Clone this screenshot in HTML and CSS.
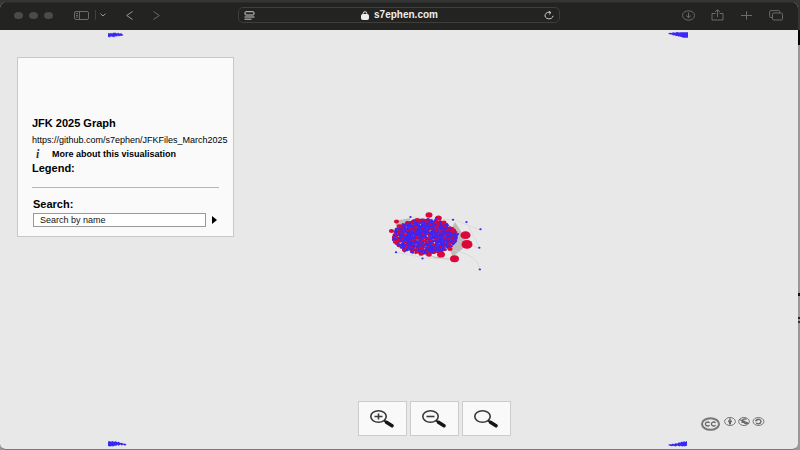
FILE: index.html
```html
<!DOCTYPE html>
<html lang="en">
<head>
<meta charset="utf-8">
<title>JFK 2025 Graph</title>
<link rel="stylesheet" href="styles.css">
</head>
<body>
<div class="window">
  <header class="toolbar">
    <div class="tools-left">
      <div class="lights"><span></span><span></span><span></span></div>
      <button class="tool sidebar" aria-label="Sidebar"><svg width="15" height="9" viewBox="0 0 15 9"><rect x=".5" y=".5" width="14" height="8" rx="1.5"/><path d="M5.5 .5v8M2 2.5h2M2 4.5h2M2 6h2"/></svg></button>
      <span class="divider"></span>
      <button class="tool menu" aria-label="Tab groups"><svg class="lit" width="6" height="4" viewBox="0 0 6 4"><path d="M.5 .7L3 3 5.500 .7"/></svg></button>
      <button class="tool nav" aria-label="Back"><svg class="lit" width="7" height="9" viewBox="0 0 7 9"><path d="M6.500 .5L.7 4.500 6.500 8.500"/></svg></button>
      <button class="tool nav" aria-label="Forward"><svg width="7" height="9" viewBox="0 0 7 9"><path d="M.5 .5L6.300 4.500 .5 8.500"/></svg></button>
    </div>
    <div class="address">
      <button class="tool" aria-label="Reader"><svg class="bright" width="11" height="9" viewBox="0 0 11 9"><rect x="1" y=".7" width="9" height="3.300" rx="1"/><path d="M.5 6h10M.5 8.200h7"/></svg></button>
      <a class="site" href="#"><svg width="8" height="9" viewBox="0 0 8 9"><rect class="solid" x=".5" y="3.500" width="7" height="5" rx="1"/><path d="M2.200 4V2.500a1.800 1.800 0 0 1 3.600 0V4"/></svg>s7ephen.com</a>
      <button class="tool" aria-label="Reload"><svg class="bright" width="10" height="9" viewBox="0 0 10 9"><path d="M6.500 1.500A4 3.300 0 1 0 9 4.800M4.500 .2L7 1.600 5 3.500"/></svg></button>
    </div>
    <div class="tools-right">
      <button class="tool" aria-label="Downloads"><svg width="13" height="11" viewBox="0 0 13 11"><ellipse cx="6.500" cy="5.500" rx="6" ry="4.700"/><path d="M6.500 2.500v5M4 5.500l2.500 2.200L9 5.500"/></svg></button>
      <button class="tool" aria-label="Share"><svg width="13" height="12" viewBox="0 0 13 12"><path d="M4.500 4.500H1v6.500h11V4.500H8.500M6.500 8V1M4 3l2.500-2.300L9 3"/></svg></button>
      <button class="tool" aria-label="New tab"><svg width="13" height="9" viewBox="0 0 13 9"><path d="M1 4.500h11M6.500 .3v8.400"/></svg></button>
      <button class="tool" aria-label="Tabs"><svg width="14" height="11" viewBox="0 0 14 11"><rect x="3.500" y="3" width="10" height="7" rx="1.200"/><path d="M3.500 7.500H2Q.7 7.500 .7 6.500v-5Q.7 .6 2 .6h7.500q1.200 0 1.200 1V3"/></svg></button>
    </div>
  </header>
  <main class="page">
    <svg id="graph" class="graph" viewBox="0 30 798 419" preserveAspectRatio="none" role="img" aria-label="Network graph"></svg>
    <section class="panel">
      <h1>JFK 2025 Graph</h1>
      <p class="link">https://github.com/s7ephen/JFKFiles_March2025</p>
      <a class="more" href="#"><i>i</i>More about this visualisation</a>
      <h2>Legend:</h2>
      <form class="search">
        <label for="search">Search:</label>
        <div class="field">
          <input id="search" type="text" value="Search by name">
          <button type="button" aria-label="Search"></button>
        </div>
      </form>
    </section>
    <footer class="footer">
      <div class="zoom">
        <button aria-label="Zoom in"><svg width="24" height="18" viewBox="0 0 24 18"><ellipse cx="8.500" cy="6.500" rx="7.700" ry="5.700"/><path d="M4.500 6.500h8M8.500 3.500v6"/><path class="handle" d="M14 10.500l3 2"/><path class="grip" d="M16.500 12.300l5.500 3.500"/></svg></button>
        <button aria-label="Zoom out"><svg width="24" height="18" viewBox="0 0 24 18"><ellipse cx="8.500" cy="6.500" rx="7.700" ry="5.700"/><path d="M4.500 6.500h8"/><path class="handle" d="M14 10.500l3 2"/><path class="grip" d="M16.500 12.300l5.500 3.500"/></svg></button>
        <button aria-label="Reset zoom"><svg width="24" height="18" viewBox="0 0 24 18"><ellipse cx="8.500" cy="6.500" rx="7.700" ry="5.700"/><path class="handle" d="M14 10.500l3 2"/><path class="grip" d="M16.500 12.300l5.500 3.500"/></svg></button>
      </div>
      <a class="license" href="#" aria-label="Creative Commons license">
        <svg width="65" height="16" viewBox="0 0 65 16">
          <ellipse class="ring" cx="9.500" cy="9" rx="8.500" ry="5.800"/>
          <path class="cc" d="M8.600 7.700C7 6.400 4.400 7 4.400 9s2.600 2.600 4.200 1.300M14.600 7.700C13 6.400 10.400 7 10.400 9s2.600 2.600 4.200 1.300"/>
          <ellipse cx="29" cy="6.500" rx="5.400" ry="4"/><circle class="fill" cx="29" cy="4.200" r=".9"/><path class="fill" d="M27.200 5.300h3.600v2h-.8v2.200h-2V7.300h-.8z"/>
          <ellipse cx="43" cy="6.500" rx="5.400" ry="4"/><path class="cc" d="M38.500 4.500l9 3.800M45.500 4.500c-1.500-1-4-.6-4 1M40.500 6.200h3M40.500 7.400h2.500c.5 1.400 2 1.500 3.200 1"/>
          <ellipse cx="57.500" cy="6.500" rx="5.400" ry="4"/><path class="cc" d="M55.200 5.600c.5-2 4.800-1.800 4.800.9 0 2.600-4.200 3-4.800 1.100M54.200 5.700h2.200"/>
        </svg>
      </a>
    </footer>
  </main>
</div>
<script src="graph.js"></script>
</body>
</html>
```
FILE: styles.css
```css
* { box-sizing: border-box; }
body {
  margin: 0;
  font-family: "Liberation Sans", Arial, sans-serif;
  color: #000;
  background: linear-gradient(#333536 0 30px, #000 30px 45px, #999 45px 293px, #111 293px 296px, #999 296px 317px, #222 317px 319px, #999 319px 321px, #333 321px 323px, #999 323px);
}
button { margin: 0; padding: 0; border: 0; background: none; }
svg { display: block; fill: none; }
h1, h2, p { margin: 0; }

.window {
  display: flex;
  flex-direction: column;
  min-height: calc(100vh - 2px);
  margin: 2px 2px 0 0;
  overflow: hidden;
  border-radius: 6px;
  border-bottom: 1px solid #777;
  background: #e8e8e8;
}
.toolbar {
  display: grid;
  grid-template-columns: 1fr 322px 1fr;
  align-items: center;
  height: 28px;
  padding: 0 1px 3px 0;
  background: #232321;
  border-top: 1px solid #2c2c2a;
}
.toolbar svg { stroke: #6b6b69; }
.toolbar .lit { stroke: #999; }
.toolbar .bright { stroke: #ccc; }
.tools-left { display: flex; align-items: center; padding-left: 14px; }
.lights { display: flex; gap: 6px; }
.lights span { width: 9px; height: 7px; border-radius: 50%; background: #4b4b49; }
.sidebar { margin-left: 21px; }
.divider { width: 1px; height: 10px; margin: 0 4px 0 6px; background: #40403e; }
.nav { margin-left: 20px; }
.address {
  display: flex;
  align-items: center;
  justify-content: space-between;
  height: 16px;
  padding: 0 4px 0 5px;
  border: 1px solid #3e3e3c;
  border-radius: 5px;
}
.site {
  display: flex;
  align-items: center;
  gap: 5px;
  font: bold 10px/12px "Liberation Sans", Arial, sans-serif;
  color: #eee;
  text-decoration: none;
}
.toolbar .site svg { stroke: #eee; }
.site .solid { fill: #eee; }
.tools-right { display: flex; align-items: center; justify-content: flex-end; gap: 16px; padding-right: 14px; }

.page { position: relative; display: flex; flex: 1; flex-direction: column; align-items: flex-start; }
.graph { position: absolute; inset: 0; width: 100%; height: 100%; }
.panel {
  position: relative;
  width: 217px;
  margin: 27px 17px;
  padding: 58px 14px 9px;
  border: 1px solid #c8c8c8;
  background: #fafafa;
}
.panel h1 { font-size: 11px; line-height: 14px; }
.link { margin-top: 4px; font-size: 9px; line-height: 12px; white-space: nowrap; }
.more {
  display: flex;
  margin-top: 1px;
  font-size: 9px;
  font-weight: bold;
  line-height: 14px;
  color: #000;
  text-decoration: none;
}
.more i { width: 20px; padding-left: 4px; font: italic bold 12px/14px "Liberation Serif", serif; color: #333; }
.panel h2 { font-size: 11px; line-height: 14px; }
.search { margin-top: 12px; padding-top: 9px; border-top: 1px solid #b5b5b5; }
.search label { display: block; padding-left: 1px; font-size: 11px; font-weight: bold; line-height: 14px; }
.field { display: flex; align-items: center; gap: 6px; margin: 2px 0 0 1px; }
.field input {
  width: 173px;
  height: 14px;
  padding: 0 6px;
  border: 1px solid #999;
  background: #fff;
  font: 9px/12px "Liberation Sans", Arial, sans-serif;
  color: #111;
}
.field button { border-left: 5px solid #000; border-top: 4px solid transparent; border-bottom: 4px solid transparent; }

.footer {
  position: relative;
  display: grid;
  grid-template-columns: 1fr auto 1fr;
  align-items: center;
  align-self: stretch;
  margin-top: auto;
  padding: 0 32px 13px 102px;
}
.zoom { display: flex; grid-column: 2; gap: 3px; }
.zoom button {
  display: grid;
  place-items: center;
  width: 49px;
  height: 35px;
  border: 1px solid #ccc;
  background: #f9f9f9;
}
.zoom svg { stroke: #3a3a3a; stroke-width: 1.6; }
.zoom .handle { stroke: #222; stroke-width: 2; }
.zoom .grip { stroke: #151515; stroke-width: 3.4; stroke-linecap: round; }
.license { justify-self: end; padding-top: 8px; }
.license svg { stroke: #777; stroke-width: 1; }
.license .ring { stroke-width: 2; }
.license .cc { stroke-width: 1.3; stroke: #666; }
.license .fill { fill: #666; stroke: none; }
```
FILE: graph.js
```js
const graph = document.getElementById("graph");
const RED = "#dc0638";
const BLUE = "#3a28f5";
const parts = [];
let seed = 2025;

function random() {
  seed = (seed * 1664525 + 1013904223) % 4294967296;
  return seed / 4294967296;
}

function node(x, y, r, color) {
  parts.push(`<ellipse cx="${x}" cy="${y}" rx="${r}" ry="${r * 0.78}" fill="${color}"/>`);
}

// Edges
parts.push('<path d="M394 221l17-3-10 18zM455 222l9 14 2 10-16 13-32-5 25-8zM425 254l10 4 18 2-3-12z" fill="#bcbcbc"/>');
parts.push('<path d="M452 219l28 11M452 250q25 4 28 19M395 252l30 6 30 1M466 222l14 26-14-4M410 217l43 3" fill="none" stroke="#d4d4d4" stroke-width=".7"/>');

// Central cluster
for (let i = 0; i < 1700; i++) {
  const angle = random() * Math.PI * 2;
  const reach = Math.sqrt(random());
  const red = random() < (reach > 0.8 ? 0.36 : 0.24);
  node(425 + Math.cos(angle) * reach * 32, 236.5 + Math.sin(angle) * reach * 17.5, red ? 1.4 : 1.3, red ? RED : BLUE);
}

// Outlying nodes: x, y, radius
[[429, 215, 3.5], [438.500, 218, 3.3], [396.500, 221.500, 2.5], [391.500, 231, 2.6], [465.500, 235.200, 5],
 [467, 244.400, 5.5], [454.500, 258.700, 4.5], [441, 254.500, 4], [429, 254.500, 2.8], [450, 249, 2.6],
 [417, 220, 2.5], [444, 222.500, 2.5], [453, 230.500, 3], [421, 254, 2.4], [404, 250, 2.2], [395, 242, 2.2], [399, 226, 2.4]]
  .forEach(([x, y, r]) => node(x, y, r, RED));
[[410.500, 217], [453, 219.700], [466.500, 222], [480.500, 229.300], [479.300, 247.800], [479.800, 269.400],
 [396, 252.200], [404.500, 251.600], [422.500, 258.500], [458, 234], [456, 241], [393, 240], [394, 236], [436, 218]]
  .forEach(([x, y]) => node(x, y, 1.2, BLUE));

// Clusters cut off at the corners of the layout
parts.push(`<g fill="${BLUE}">
<path d="M108 33l2 .5 1-.8 1 1 1-1h3l1 1 1-1 2 1 1-.6 1 1 1.500 1-2 1-1.500-.3-1 .8-1-1-1 1-2-.4-1 1.300-1-1-1 .5-1-1-1 1.400-1-.7-1 .6z"/>
<path d="M668 33.500l2-.8 2 .3 1-.8 2 .6 2-.8 2 .5 2-.3h7v5.500h-5l-1-.8-1 .4-1-1-1.500.4-1-1-1.500.5-1-1-2 .2-1-1-2 .2z"/>
<path d="M108 441.500l2-.4 1 .8 1-.8 2 .6 2-.5 1 1 2-.4 1 1.200 2-.2 1 1 2-.2 1.500 1.200-1.500 1-1.500-1-2 .8-1-1-2 1.200-1-1-1.500 1.200-1-.6-2 1-1-.5-2 .6-2-.6z"/>
<path d="M668 445l2-1 1 .6 2-1 1 .6 2-1.200 1 .7 2-1.500 1 .6 2-1.200 1 .7 1-1.300 1 1 2-.9v5l-1-.3-1 .8-1.500-.7-1 .6-2-.7-1 .6-2-.8-2 .8-2-.7-2 .5z"/></g>`);

graph.innerHTML = parts.join("");
```
